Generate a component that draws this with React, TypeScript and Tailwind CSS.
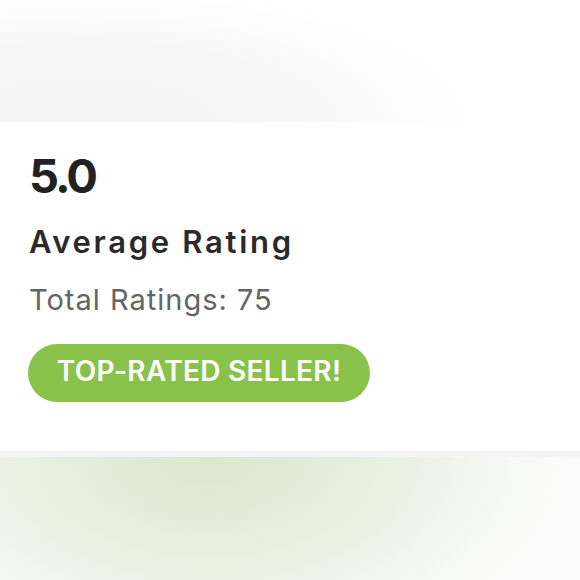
import React from 'react';

const App: React.FC = () => {
  return (
    <div className="w-[580px] h-[580px] flex flex-col bg-white overflow-hidden font-['Inter',sans-serif]">
      {/* faint grey backdrop above the card */}
      <div className="h-[122px] bg-[radial-gradient(ellipse_85%_140%_at_15%_100%,#f3f3f3_0%,#f7f7f7_45%,#fdfdfd_70%,#ffffff_80%)]" />

      <div className="h-[329px] bg-white pl-[29px] pt-[30px] flex flex-col">
        <div className="text-[47px] leading-none font-bold tracking-[-3px] text-[#222222]">5.0</div>
        <div className="mt-[27px] text-[31px] leading-none font-semibold tracking-[2.7px] text-[#2a2a2a]">Average Rating</div>
        <div className="mt-[28px] text-[29px] leading-none tracking-[1px] text-[#646464]">Total Ratings: 75</div>
        <div className="mt-[30px] self-start h-[58px] w-[342px] -ml-px pb-[5px] rounded-full bg-[#89c24a] flex items-center justify-center">
          <span className="text-white text-[28px] font-semibold tracking-[0.3px] leading-none">TOP-RATED SELLER!</span>
        </div>
      </div>

      <div className="h-[6px] bg-[#f5f4f6]" />

      {/* soft green glow below */}
      <div className="flex-1 bg-[radial-gradient(ellipse_75%_210%_at_36%_0%,#d9e7cd_0%,#e4eedb_30%,#eff4ea_55%,#f8faf6_72%,#fcfbfc_85%)]" />
    </div>
  );
};

export default App;
